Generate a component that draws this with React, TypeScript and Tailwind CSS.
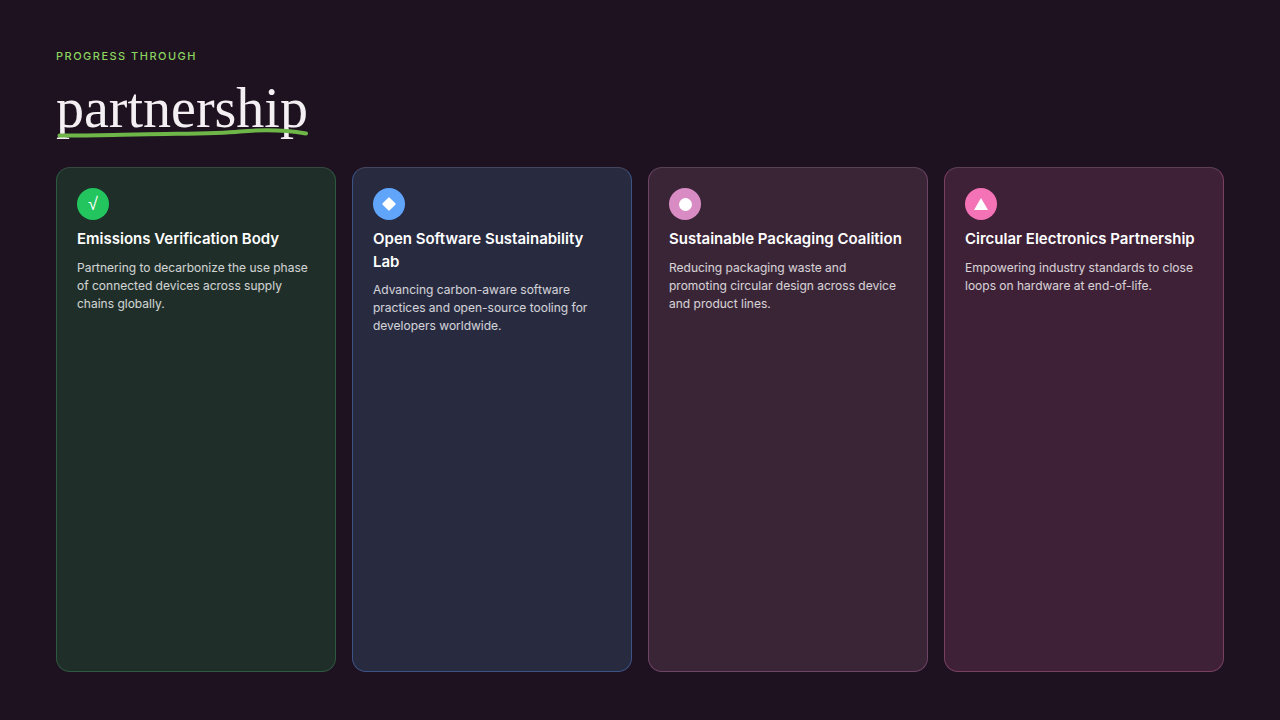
import React from "react";

const partners = [
  {
    name: "Emissions Verification Body",
    text: "Partnering to decarbonize the use phase of connected devices across supply chains globally.",
    card: "bg-[#1f2e29] border-[#2d5a41] border-t-[#35493f]",
    dot: "bg-[#22c55e]",
    icon: <span className="font-['Liberation_Sans',sans-serif] text-[18px] leading-none text-white">√</span>,
  },
  {
    name: "Open Software Sustainability Lab",
    text: "Advancing carbon-aware software practices and open-source tooling for developers worldwide.",
    card: "bg-[#282a40] border-[#3b5488] border-t-[#444660]",
    dot: "bg-[#60a5fa]",
    icon: <span className="w-[10px] h-[10px] rotate-45 rounded-[1px] bg-white"></span>,
  },
  {
    name: "Sustainable Packaging Coalition",
    text: "Reducing packaging waste and promoting circular design across device and product lines.",
    card: "bg-[#3a2537] border-[#6f4566] border-t-[#5a4256]",
    dot: "bg-[#d98cc4]",
    icon: <span className="w-[13px] h-[13px] rounded-full bg-white"></span>,
  },
  {
    name: "Circular Electronics Partnership",
    text: "Empowering industry standards to close loops on hardware at end-of-life.",
    card: "bg-[#3e2137] border-[#7a3f62] border-t-[#5e3f56]",
    dot: "bg-[#f472b6]",
    icon: (
      <svg className="mb-[1px]" width="14" height="12" viewBox="0 0 14 12">
        <path d="M7 0L14 12H0Z" fill="#fff" />
      </svg>
    ),
  },
];

const App: React.FC = () => {
  return (
    <div className="w-[1280px] h-[720px] overflow-hidden flex flex-col bg-[#1e1220] px-14 pt-12 pb-12 font-['Inter',sans-serif]">
      <p className="text-[11px] leading-4 font-medium tracking-[0.135em] text-[#8bd45f] uppercase">
        Progress through
      </p>

      <div className="relative self-start mt-[11px] mb-[25px]">
        <h1 className="font-['Liberation_Serif',serif] text-[56px] leading-[67px] text-[#f3eff3]">
          partnership
        </h1>
        {/* hand-drawn underline, sits over the descenders */}
        <svg
          className="absolute left-0 top-[53px]"
          width="254"
          height="14"
          viewBox="0 0 254 14"
          fill="none"
        >
          <path
            d="M3.5 7.5C30 8 70 6.5 110 6C150 5.5 165 5.5 184 3.5C205 1.5 230 2 250 5.5"
            stroke="#6fb648"
            strokeWidth="4"
            strokeLinecap="round"
          />
        </svg>
      </div>

      <div className="flex-1 grid grid-cols-4 gap-4">
        {partners.map((p) => (
          <div key={p.name} className={`rounded-[14px] border p-5 ${p.card}`}>
            <div className={`w-8 h-8 rounded-full flex items-center justify-center ${p.dot}`}>
              {p.icon}
            </div>
            <h2 className="mt-2 text-[15px] leading-[22.5px] font-semibold text-white">
              {p.name}
            </h2>
            <p className="mt-2 text-[12px] leading-[18px] text-white/80">{p.text}</p>
          </div>
        ))}
      </div>
    </div>
  );
};

export default App;
